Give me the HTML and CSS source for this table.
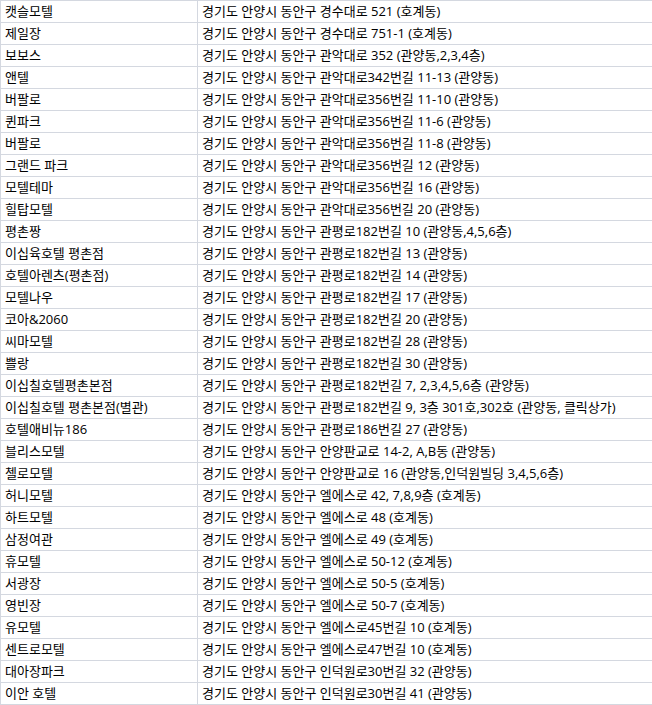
FILE: index.html
```html
<!DOCTYPE html>
<html lang="ko">
<head>
<meta charset="utf-8">
<link rel="stylesheet" href="styles.css">
</head>
<body>
<table class="sheet">
<colgroup><col class="c-name"><col class="c-addr"></colgroup>
<tbody>
<tr><td>캣슬모텔</td><td>경기도 안양시 동안구 경수대로 521 (호계동)</td></tr>
<tr><td>제일장</td><td>경기도 안양시 동안구 경수대로 751-1 (호계동)</td></tr>
<tr><td>보보스</td><td>경기도 안양시 동안구 관악대로 352 (관양동,2,3,4층)</td></tr>
<tr><td>앤텔</td><td>경기도 안양시 동안구 관악대로342번길 11-13 (관양동)</td></tr>
<tr><td>버팔로</td><td>경기도 안양시 동안구 관악대로356번길 11-10 (관양동)</td></tr>
<tr><td>퀸파크</td><td>경기도 안양시 동안구 관악대로356번길 11-6 (관양동)</td></tr>
<tr><td>버팔로</td><td>경기도 안양시 동안구 관악대로356번길 11-8 (관양동)</td></tr>
<tr><td>그랜드 파크</td><td>경기도 안양시 동안구 관악대로356번길 12 (관양동)</td></tr>
<tr><td>모텔테마</td><td>경기도 안양시 동안구 관악대로356번길 16 (관양동)</td></tr>
<tr><td>힐탑모텔</td><td>경기도 안양시 동안구 관악대로356번길 20 (관양동)</td></tr>
<tr><td>평촌짱</td><td>경기도 안양시 동안구 관평로182번길 10 (관양동,4,5,6층)</td></tr>
<tr><td>이십육호텔 평촌점</td><td>경기도 안양시 동안구 관평로182번길 13 (관양동)</td></tr>
<tr><td>호텔아렌츠(평촌점)</td><td>경기도 안양시 동안구 관평로182번길 14 (관양동)</td></tr>
<tr><td>모텔나우</td><td>경기도 안양시 동안구 관평로182번길 17 (관양동)</td></tr>
<tr><td>코아&amp;2060</td><td>경기도 안양시 동안구 관평로182번길 20 (관양동)</td></tr>
<tr><td>씨마모텔</td><td>경기도 안양시 동안구 관평로182번길 28 (관양동)</td></tr>
<tr><td>쁠랑</td><td>경기도 안양시 동안구 관평로182번길 30 (관양동)</td></tr>
<tr><td>이십칠호텔평촌본점</td><td>경기도 안양시 동안구 관평로182번길 7, 2,3,4,5,6층 (관양동)</td></tr>
<tr><td>이십칠호텔 평촌본점(별관)</td><td>경기도 안양시 동안구 관평로182번길 9, 3층 301호,302호 (관양동, 클릭상가)</td></tr>
<tr><td>호텔애비뉴186</td><td>경기도 안양시 동안구 관평로186번길 27 (관양동)</td></tr>
<tr><td>블리스모텔</td><td>경기도 안양시 동안구 안양판교로 14-2, A,B동 (관양동)</td></tr>
<tr><td>첼로모텔</td><td>경기도 안양시 동안구 안양판교로 16 (관양동,인덕원빌딩 3,4,5,6층)</td></tr>
<tr><td>허니모텔</td><td>경기도 안양시 동안구 엘에스로 42, 7,8,9층 (호계동)</td></tr>
<tr><td>하트모텔</td><td>경기도 안양시 동안구 엘에스로 48 (호계동)</td></tr>
<tr><td>삼정여관</td><td>경기도 안양시 동안구 엘에스로 49 (호계동)</td></tr>
<tr><td>휴모텔</td><td>경기도 안양시 동안구 엘에스로 50-12 (호계동)</td></tr>
<tr><td>서광장</td><td>경기도 안양시 동안구 엘에스로 50-5 (호계동)</td></tr>
<tr><td>영빈장</td><td>경기도 안양시 동안구 엘에스로 50-7 (호계동)</td></tr>
<tr><td>유모텔</td><td>경기도 안양시 동안구 엘에스로45번길 10 (호계동)</td></tr>
<tr><td>센트로모텔</td><td>경기도 안양시 동안구 엘에스로47번길 10 (호계동)</td></tr>
<tr><td>대아장파크</td><td>경기도 안양시 동안구 인덕원로30번길 32 (관양동)</td></tr>
<tr><td>이안 호텔</td><td>경기도 안양시 동안구 인덕원로30번길 41 (관양동)</td></tr>
</tbody>
</table>
</body>
</html>
```
FILE: styles.css
```css
html, body {
  margin: 0;
  padding: 0;
  background: #ffffff;
}
.sheet {
  border-collapse: collapse;
  table-layout: fixed;
  width: 652px;
  font-family: "Open Sans", "Noto Sans CJK KR", sans-serif;
  font-size: 13px;
  color: #000000;
}
.c-name { width: 197px; }
.c-addr { width: 455px; }
.sheet td {
  border: 1px solid #d4d8e0;
  height: 21px;
  padding: 0 0 0 4px;
  line-height: 21px;
  white-space: nowrap;
  overflow: hidden;
  box-sizing: border-box;
}
```
